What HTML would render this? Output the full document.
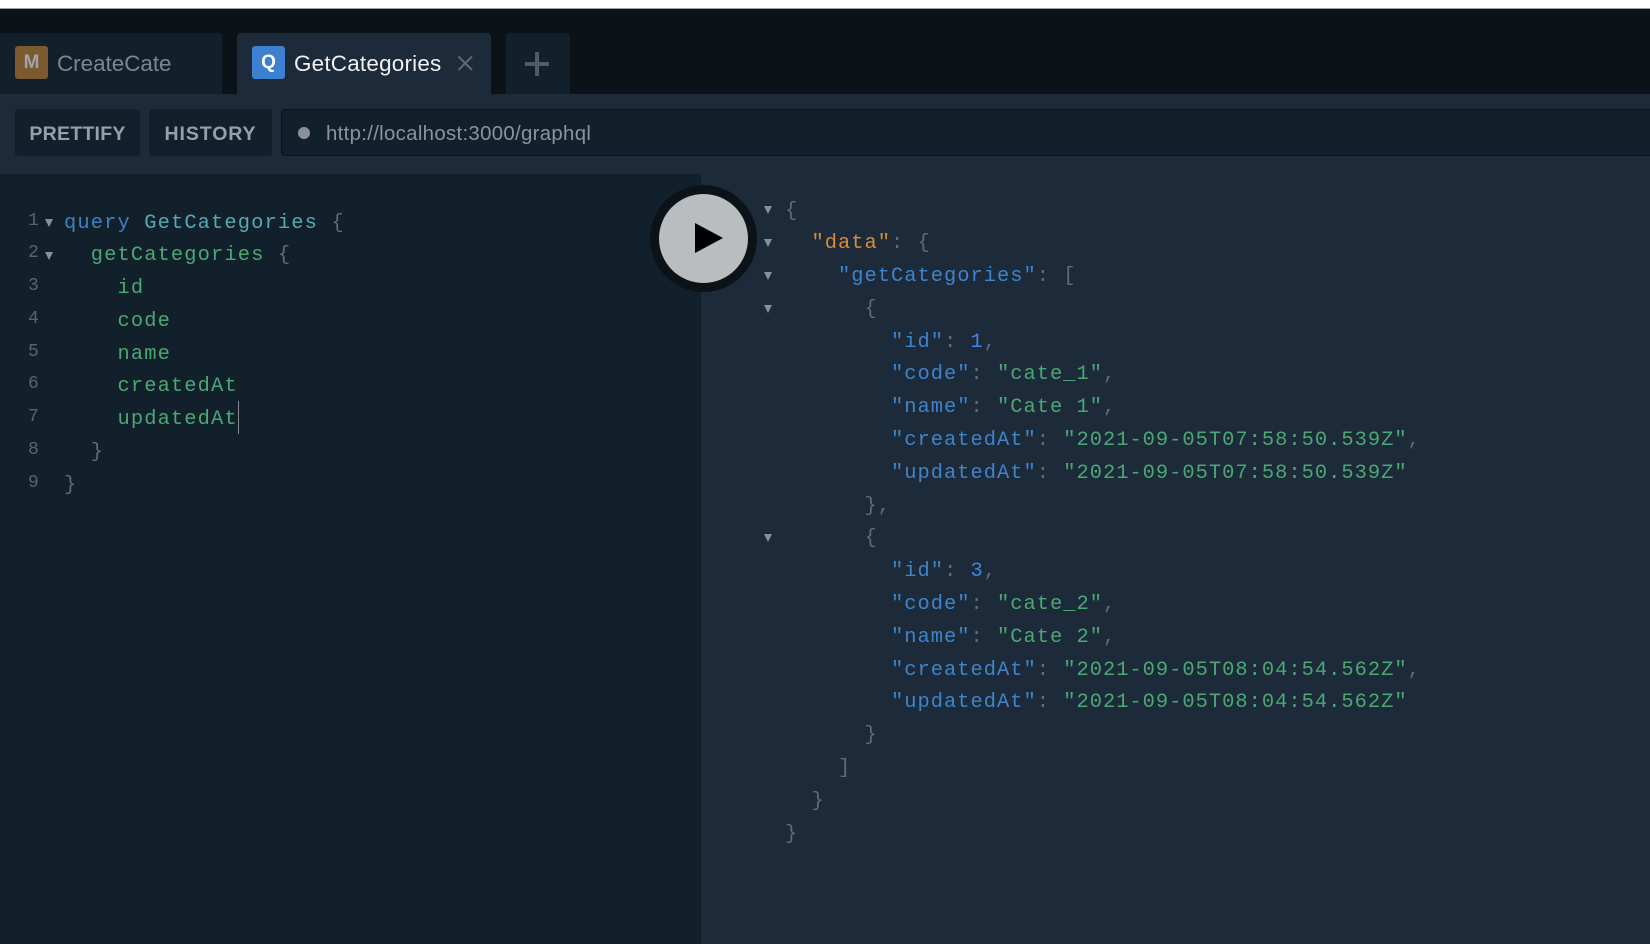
<!DOCTYPE html>
<html><head><meta charset="utf-8"><style>
html,body{margin:0;padding:0;width:1650px;height:944px;overflow:hidden;background:#1c2a3a}
div,pre,svg{position:absolute}
.s{font-family:"Liberation Sans",sans-serif;white-space:nowrap}
.m,.m *{font-family:"Liberation Mono",monospace;font-size:20.4px;letter-spacing:1.13px;line-height:32.8px;margin:0}
.r,.r *{letter-spacing:1.01px}
.k{color:#3f7fc4}.g{color:#4aa873}.t{color:#54a9b5}.p{color:#5f6b76}.o{color:#d98c35}.n{color:#3f85e0}
.j{color:#3f84c8}.ar{width:0;height:0;border-left:4.5px solid transparent;border-right:4.5px solid transparent;border-top:8px solid #8a9096}
#w{left:0;top:0;width:1650px;height:944px;filter:blur(.3px)}
</style></head><body><div id="w">
<div style="left:0;top:0;width:1650px;height:8px;background:#fff;border-bottom:1px solid #9aa0a5"></div>
<div style="left:0;top:9px;width:1650px;height:85px;background:#0b1218"></div>
<div style="left:0;top:33px;width:222px;height:61px;background:#12202b;border-radius:0 4px 0 0"></div>
<div style="left:237px;top:33px;width:254px;height:61px;background:#1c2a3a;border-radius:4px 4px 0 0"></div>
<div style="left:506px;top:33px;width:64px;height:61px;background:#12202b;border-radius:4px 4px 0 0"></div>
<div class="s" style="left:15px;top:46px;width:33px;height:33px;border-radius:3px;background:#7c5a30;color:#a0a6a8;font-size:19px;font-weight:700;text-align:center;line-height:34px">M</div>
<div class="s" style="left:57px;top:46px;line-height:36px;font-size:22.4px;letter-spacing:0;color:#7d868e">CreateCate</div>
<div class="s" style="left:252px;top:46px;width:33px;height:33px;border-radius:3px;background:#3d7fd0;color:#fff;font-size:19px;font-weight:700;text-align:center;line-height:34px">Q</div>
<div class="s" style="left:294px;top:46px;line-height:36px;font-size:22.4px;letter-spacing:.24px;color:#f0f2f4">GetCategories</div>
<svg style="left:455px;top:53px" width="20" height="20" viewBox="0 0 20 20"><path d="M3.5 3.5L17 17M17 3.5L3.5 17" stroke="#5d6872" stroke-width="2" fill="none"/></svg>
<div style="left:525px;top:62px;width:24px;height:4px;background:#4f5b66"></div>
<div style="left:535px;top:52px;width:4px;height:24px;background:#4f5b66"></div>

<div style="left:0;top:94px;width:1650px;height:80px;background:#1c2a3a"></div>
<div class="s" style="left:15px;top:109px;width:125px;height:47px;background:#12202b;border-radius:3px;text-align:center;color:#97a0a6;font-size:19.5px;font-weight:700;line-height:51px;letter-spacing:.25px">PRETTIFY</div>
<div class="s" style="left:149px;top:109px;width:123px;height:47px;background:#12202b;border-radius:3px;text-align:center;color:#97a0a6;font-size:19.5px;font-weight:700;line-height:51px;letter-spacing:.9px">HISTORY</div>
<div style="left:281px;top:109px;width:1380px;height:45px;background:#12202b;border:1px solid #0b1218;border-radius:4px"></div>
<div style="left:298px;top:127px;width:12px;height:12px;border-radius:50%;background:#8a9097"></div>
<div class="s" style="left:326px;top:116px;line-height:36px;font-size:20.4px;color:#8b949b;letter-spacing:.31px">http://localhost:3000/graphql</div>

<div style="left:0;top:174px;width:701px;height:770px;background:#12202b"></div>

<pre class="m" style="left:28px;top:204.5px;color:#5a646e;font-size:18px;letter-spacing:0">1
2
3
4
5
6
7
8
9</pre>
<div class="ar" style="left:45px;top:219px"></div>
<div class="ar" style="left:45px;top:252px"></div>
<pre class="m" style="left:64px;top:207.5px"><span class="k">query</span> <span class="t">GetCategories</span> <span class="p">{</span>
  <span class="g">getCategories</span> <span class="p">{</span>
    <span class="g">id</span>
    <span class="g">code</span>
    <span class="g">name</span>
    <span class="g">createdAt</span>
    <span class="g">updatedAt</span>
  <span class="p">}</span>
<span class="p">}</span></pre>
<div style="left:237.5px;top:401px;width:1.5px;height:33px;background:#7f8a93"></div>

<div class="ar" style="left:764px;top:206px"></div>
<div class="ar" style="left:764px;top:239px"></div>
<div class="ar" style="left:764px;top:272px"></div>
<div class="ar" style="left:764px;top:305px"></div>
<div class="ar" style="left:764px;top:534px"></div>
<pre class="m r" style="left:785px;top:195.5px"><span class="p">{</span>
  <span class="o">"data"</span><span class="p">: {</span>
    <span class="j">"getCategories"</span><span class="p">: [</span>
      <span class="p">{</span>
        <span class="j">"id"</span><span class="p">:</span> <span class="n">1</span><span class="p">,</span>
        <span class="j">"code"</span><span class="p">:</span> <span class="g">"cate_1"</span><span class="p">,</span>
        <span class="j">"name"</span><span class="p">:</span> <span class="g">"Cate 1"</span><span class="p">,</span>
        <span class="j">"createdAt"</span><span class="p">:</span> <span class="g">"2021-09-05T07:58:50.539Z"</span><span class="p">,</span>
        <span class="j">"updatedAt"</span><span class="p">:</span> <span class="g">"2021-09-05T07:58:50.539Z"</span>
      <span class="p">},</span>
      <span class="p">{</span>
        <span class="j">"id"</span><span class="p">:</span> <span class="n">3</span><span class="p">,</span>
        <span class="j">"code"</span><span class="p">:</span> <span class="g">"cate_2"</span><span class="p">,</span>
        <span class="j">"name"</span><span class="p">:</span> <span class="g">"Cate 2"</span><span class="p">,</span>
        <span class="j">"createdAt"</span><span class="p">:</span> <span class="g">"2021-09-05T08:04:54.562Z"</span><span class="p">,</span>
        <span class="j">"updatedAt"</span><span class="p">:</span> <span class="g">"2021-09-05T08:04:54.562Z"</span>
      <span class="p">}</span>
    <span class="p">]</span>
  <span class="p">}</span>
<span class="p">}</span></pre>

<div style="left:650px;top:185px;width:107px;height:107px;border-radius:50%;background:#0b1218"></div>
<div style="left:659px;top:194px;width:89px;height:89px;border-radius:50%;background:#b9bdc0"></div>
<svg style="left:690px;top:218px" width="40" height="40" viewBox="0 0 40 40"><path d="M5 5L33 20L5 35Z" fill="#000"/></svg>
</div></body></html>
